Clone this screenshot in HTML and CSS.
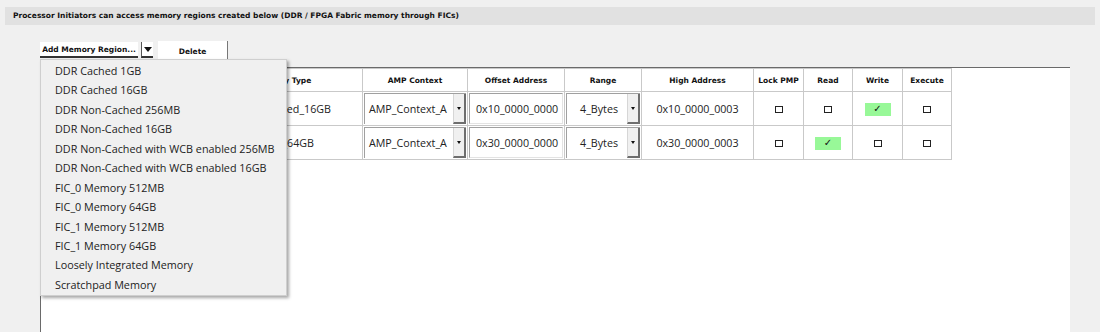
FILE: index.html
```html
<!DOCTYPE html>
<html lang="en">
<head>
    <meta charset="UTF-8">
    <title>Memory Regions</title>
    <link rel="stylesheet" href="styles.css">
</head>
<body>
    <div class="page">
        <div class="banner">Processor Initiators can access memory regions created below (DDR / FPGA Fabric memory through FICs)</div>

        <div class="toolbar">
            <button class="tool-btn add-btn">Add Memory Region...</button>
            <button class="tool-btn arrow-btn"><span class="tri"></span></button>
            <button class="tool-btn delete-btn">Delete</button>

            <ul class="menu">
                <li>DDR Cached 1GB</li>
                <li>DDR Cached 16GB</li>
                <li>DDR Non-Cached 256MB</li>
                <li>DDR Non-Cached 16GB</li>
                <li>DDR Non-Cached with WCB enabled 256MB</li>
                <li>DDR Non-Cached with WCB enabled 16GB</li>
                <li>FIC_0 Memory 512MB</li>
                <li>FIC_0 Memory 64GB</li>
                <li>FIC_1 Memory 512MB</li>
                <li>FIC_1 Memory 64GB</li>
                <li>Loosely Integrated Memory</li>
                <li>Scratchpad Memory</li>
            </ul>
        </div>

        <div class="panel">
            <table class="regions">
                <colgroup>
                    <col style="width:162px">
                    <col style="width:158px">
                    <col style="width:105px">
                    <col style="width:97px">
                    <col style="width:77px">
                    <col style="width:112px">
                    <col style="width:50px">
                    <col style="width:49px">
                    <col style="width:50px">
                    <col style="width:49px">
                </colgroup>
                <thead>
                    <tr>
                        <th>Region Name</th>
                        <th class="type-head">Memory Type</th>
                        <th>AMP Context</th>
                        <th>Offset Address</th>
                        <th>Range</th>
                        <th>High Address</th>
                        <th>Lock PMP</th>
                        <th>Read</th>
                        <th>Write</th>
                        <th>Execute</th>
                    </tr>
                </thead>
                <tbody>
                    <tr>
                        <td class="name">DDR_Region_0</td>
                        <td class="type">DDR_Non_Cached_16GB</td>
                        <td><div class="combo"><span class="combo-val">AMP_Context_A</span><span class="combo-arrow"><span class="tri small"></span></span></div></td>
                        <td><div class="field">0x10_0000_0000</div></td>
                        <td><div class="combo range"><span class="combo-val">4_Bytes</span><span class="combo-arrow"><span class="tri small"></span></span></div></td>
                        <td class="high">0x10_0000_0003</td>
                        <td><span class="box"></span></td>
                        <td><span class="box"></span></td>
                        <td><span class="tick">&#10003;</span></td>
                        <td><span class="box"></span></td>
                    </tr>
                    <tr>
                        <td class="name">FIC_Region_0</td>
                        <td class="type">FIC_0_Memory_64GB</td>
                        <td><div class="combo"><span class="combo-val">AMP_Context_A</span><span class="combo-arrow"><span class="tri small"></span></span></div></td>
                        <td><div class="field">0x30_0000_0000</div></td>
                        <td><div class="combo range"><span class="combo-val">4_Bytes</span><span class="combo-arrow"><span class="tri small"></span></span></div></td>
                        <td class="high">0x30_0000_0003</td>
                        <td><span class="box"></span></td>
                        <td><span class="tick">&#10003;</span></td>
                        <td><span class="box"></span></td>
                        <td><span class="box"></span></td>
                    </tr>
                </tbody>
            </table>
        </div>
    </div>
</body>
</html>
```

FILE: styles.css
```css
body {
    margin: 0;
    background-color: #f0f0f0;
    font-family: "Open Sans", "Noto Sans", sans-serif;
    color: #1e1e1e;
    overflow: hidden;
}
.page {
    height: 332px;
    padding: 7px 5px 0 5px;
    box-sizing: border-box;
    display: flex;
    flex-direction: column;
}
.banner {
    height: 18px;
    line-height: 18px;
    background-color: #e1e1e1;
    font-family: "DejaVu Sans", sans-serif;
    font-weight: bold;
    font-size: 7.5px;
    padding-left: 8px;
    color: #111;
}
.toolbar {
    position: relative;
    display: flex;
    margin: 17px 0 0 35px;
    height: 18px;
}
.tool-btn {
    border: 0;
    margin: 0;
    padding: 0;
    background-color: #fff;
    font-family: "DejaVu Sans", sans-serif;
    font-weight: bold;
    font-size: 7.5px;
    color: #111;
    height: 16px;
    white-space: nowrap;
}
.add-btn {
    width: 98px;
    border-bottom: 2px solid #333;
}
.arrow-btn {
    width: 12px;
    margin-left: 3px;
    border-left: 1px solid #555;
    border-bottom: 2px solid #333;
    display: flex;
    align-items: center;
    justify-content: center;
}
.delete-btn {
    width: 70px;
    height: 18px;
    margin-left: 5px;
    margin-top: -1px;
    border-right: 1px solid #777;
    padding-top: 2px;
}
.tri {
    width: 0;
    height: 0;
    border-left: 4px solid transparent;
    border-right: 4px solid transparent;
    border-top: 5px solid #111;
}
.tri.small {
    border-left-width: 2px;
    border-right-width: 2px;
    border-top-width: 3px;
}
.menu {
    position: absolute;
    left: 0;
    top: 17px;
    width: 245px;
    margin: 0;
    padding: 1px 0 1px 0;
    list-style: none;
    background-color: #f0f0f0;
    border: 1px solid #cfcfcf;
    box-shadow: 2px 2px 3px rgba(0, 0, 0, 0.35);
    z-index: 2;
}
.menu li {
    height: 19.45px;
    line-height: 19.45px;
    padding-left: 14px;
    font-size: 10.8px;
    color: #222;
    white-space: nowrap;
}
.panel {
    flex: 1;
    margin: 7px 25px 0 35px;
    background-color: #fff;
    border-top: 1px solid #6a6a6a;
    border-left: 1px solid #6a6a6a;
    padding-left: 1px;
}
.regions {
    border-collapse: collapse;
    table-layout: fixed;
    width: 909px;
}
.regions th,
.regions td {
    border: 1px solid #c9c9c9;
    padding: 0;
    text-align: center;
}
.regions th {
    height: 22px;
    font-family: "DejaVu Sans", sans-serif;
    font-weight: bold;
    font-size: 7.5px;
    color: #111;
}
.regions td {
    height: 33px;
    font-size: 10.7px;
    color: #222;
}
.regions td.type,
.regions td.name {
    text-align: left;
    padding-left: 5px;
    white-space: nowrap;
    overflow: hidden;
}
.regions th.type-head {
    text-align: left;
    padding-left: 50px;
}
.combo,
.field {
    height: 31px;
    margin: 0 1px;
    box-sizing: border-box;
    border-top: 1px solid #a0a0a0;
    border-left: 1px solid #a0a0a0;
    background-color: #fff;
    display: flex;
    align-items: center;
}
.field {
    padding-left: 6px;
    border-right: 1px solid #e3e3e3;
    border-bottom: 1px solid #e3e3e3;
}
.combo-val {
    flex: 1;
    text-align: left;
    padding-left: 4px;
    white-space: nowrap;
}
.range .combo-val {
    text-align: center;
}
.combo-arrow {
    width: 10px;
    align-self: stretch;
    background-color: #f0f0f0;
    border-left: 1px solid #d6d6d6;
    border-right: 2px solid #6e6e6e;
    border-bottom: 2px solid #6e6e6e;
    display: flex;
    align-items: center;
    justify-content: center;
}
.box {
    display: inline-block;
    width: 6px;
    height: 5px;
    border: 1.5px solid #222;
    vertical-align: middle;
}
.tick {
    display: inline-block;
    width: 26px;
    height: 13px;
    line-height: 12px;
    background-color: #98f898;
    font-family: "DejaVu Sans", sans-serif;
    font-size: 10px;
    color: #111;
    vertical-align: middle;
}
```
